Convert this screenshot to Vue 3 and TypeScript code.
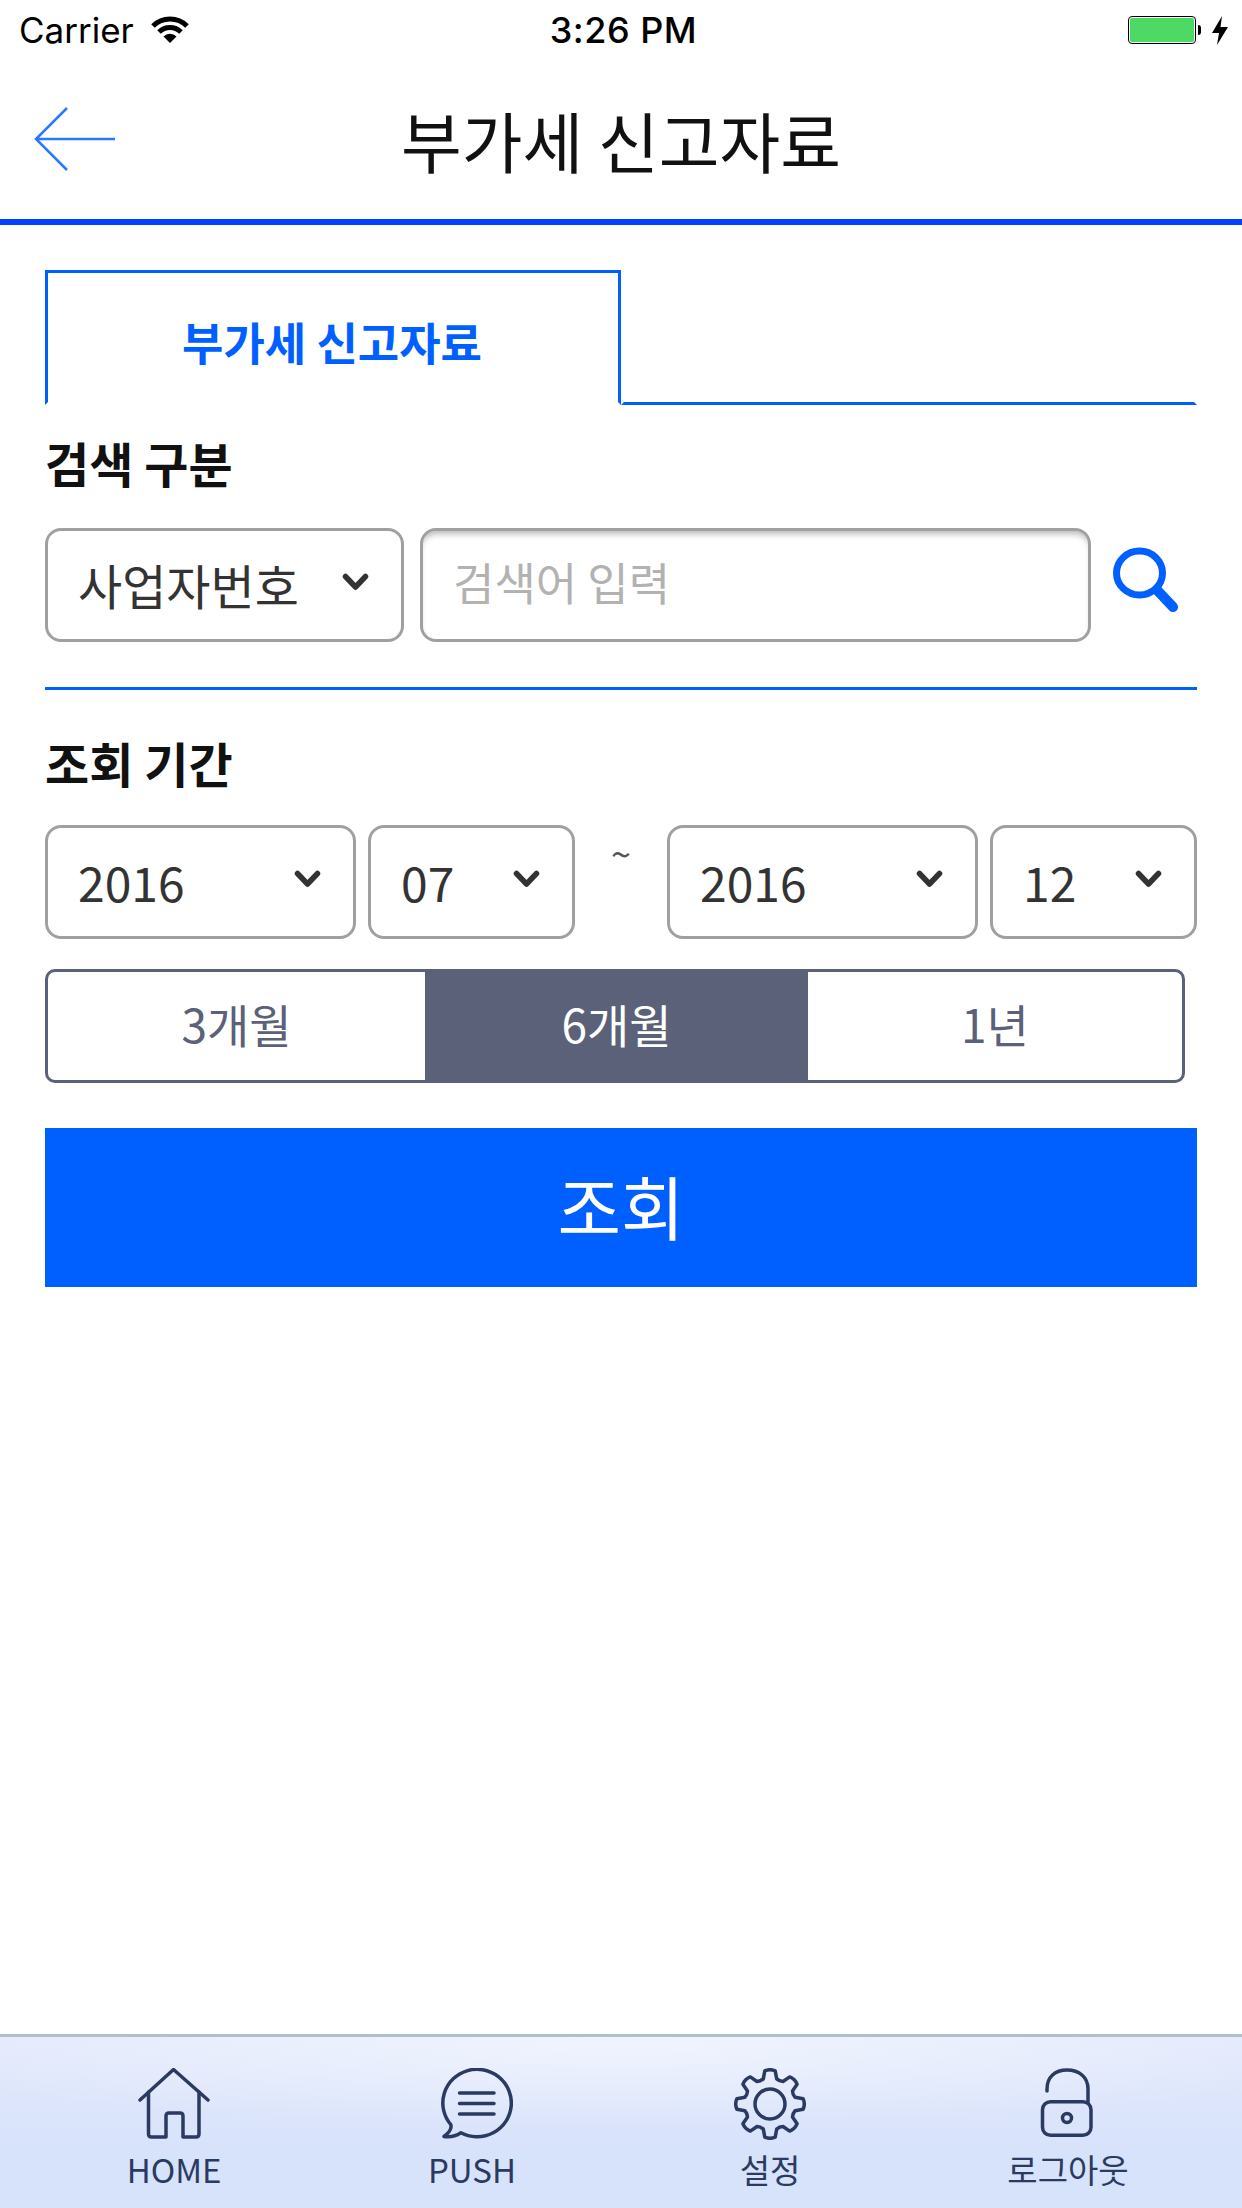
<script setup lang="ts">
interface DateSelect {
  value: string
  size: 'year' | 'month'
}

const from: DateSelect[] = [
  { value: '2016', size: 'year' },
  { value: '07', size: 'month' },
]
const to: DateSelect[] = [
  { value: '2016', size: 'year' },
  { value: '12', size: 'month' },
]
const periods = ['3개월', '6개월', '1년']
const activePeriod = '6개월'

// 8 teeth gear outline, centre at 36,36
const gearPath = (() => {
  const pts: string[] = []
  const teeth = 8
  for (let i = 0; i < teeth; i++) {
    const a = (i * 360) / teeth - 90
    const at = (r: number, d: number) => {
      const t = ((a + d) * Math.PI) / 180
      return `${(36 + r * Math.cos(t)).toFixed(1)} ${(36 + r * Math.sin(t)).toFixed(1)}`
    }
    pts.push(`${i === 0 ? 'M' : 'L'}${at(26, -15)}`)
    pts.push(`L${at(33.5, -9)}`)
    pts.push(`Q${at(35.5, 0)} ${at(33.5, 9)}`)
    pts.push(`L${at(26, 15)}`)
    const next = ((a + 22.5) * Math.PI) / 180
    const q = `${(36 + 24.5 * Math.cos(next)).toFixed(1)} ${(36 + 24.5 * Math.sin(next)).toFixed(1)}`
    const t2 = ((a + 30) * Math.PI) / 180
    pts.push(`Q${q} ${(36 + 26 * Math.cos(t2)).toFixed(1)} ${(36 + 26 * Math.sin(t2)).toFixed(1)}`)
  }
  return pts.join(' ') + 'Z'
})()
</script>

<template>
  <div class="page">
    <div class="status">
      <div class="status__left">
        <span class="status__carrier">Carrier</span>
        <svg class="wifi" width="38" height="27" viewBox="0 0 38 27">
          <path d="M2 10A24 24 0 0 1 36 10" fill="none" stroke="#000" stroke-width="5" />
          <path d="M8 16A15.5 15.5 0 0 1 30 16" fill="none" stroke="#000" stroke-width="5" />
          <path d="M19 27L12.5 20.5A9 9 0 0 1 25.5 20.5Z" fill="#000" />
        </svg>
      </div>
      <div class="status__time">3:26 PM</div>
      <div class="status__right">
        <div class="battery"><div class="battery__fill" /></div>
        <div class="battery__nub" />
        <svg class="bolt" width="16" height="29" viewBox="0 0 16 29">
          <path d="M10 0L0 17H7L5 29L16 11H8.500Z" fill="#000" />
        </svg>
      </div>
    </div>

    <header class="header">
      <svg class="header__back" width="82" height="64" viewBox="0 0 82 64">
        <path d="M33 1L2 32L33 63M2 32H81" fill="none" stroke="#2a78ff" stroke-width="2.500" />
      </svg>
      <h1 class="header__title">부가세 신고자료</h1>
    </header>

    <main class="main">
      <div class="tabs">
        <div class="tabs__item">부가세 신고자료</div>
        <div class="tabs__rest" />
      </div>

      <div class="label">검색 구분</div>
      <div class="row">
        <div class="select select_type">
          <span>사업자번호</span>
          <svg class="select__arrow" width="27" height="18" viewBox="0 0 27 18">
            <path d="M3.500 3.500L13.500 14L23.500 3.500" fill="none" stroke="#333" stroke-width="5.500" stroke-linecap="round" stroke-linejoin="round" />
          </svg>
        </div>
        <input class="search" placeholder="검색어 입력" />
        <svg class="search__icon" width="66" height="66" viewBox="0 0 66 66">
          <ellipse cx="26.500" cy="26" rx="23" ry="22" fill="none" stroke="#0060ff" stroke-width="7" />
          <path d="M44 43L60 60" fill="none" stroke="#0060ff" stroke-width="10" stroke-linecap="round" />
        </svg>
      </div>

      <div class="divider" />

      <div class="label label_second">조회 기간</div>
      <div class="row">
        <div
            v-for="item in from"
            :key="item.size"
            class="select"
            :class="`select_${item.size}`"
        >
          <span>{{ item.value }}</span>
          <svg class="select__arrow" width="27" height="18" viewBox="0 0 27 18">
            <path d="M3.500 3.500L13.500 14L23.500 3.500" fill="none" stroke="#333" stroke-width="5.500" stroke-linecap="round" stroke-linejoin="round" />
          </svg>
        </div>
        <span class="tilde">~</span>
        <div
            v-for="item in to"
            :key="item.size"
            class="select"
            :class="`select_${item.size}`"
        >
          <span>{{ item.value }}</span>
          <svg class="select__arrow" width="27" height="18" viewBox="0 0 27 18">
            <path d="M3.500 3.500L13.500 14L23.500 3.500" fill="none" stroke="#333" stroke-width="5.500" stroke-linecap="round" stroke-linejoin="round" />
          </svg>
        </div>
      </div>

      <div class="periods">
        <div
            v-for="period in periods"
            :key="period"
            class="periods__item"
            :class="{ periods__item_active: period === activePeriod }"
        >
          {{ period }}
        </div>
      </div>

      <button class="submit">조회</button>
    </main>

    <nav class="nav">
      <div class="nav__item">
        <svg width="72" height="72" viewBox="0 0 72 72" fill="none" stroke="#2b3a60" stroke-width="3.500" stroke-linecap="round" stroke-linejoin="round">
          <path d="M2 32L35.500 1.500L70 32" />
          <path d="M10.500 24V66Q10.500 69 13.500 69H28V48Q28 45 31 45H42Q45 45 45 48V69H58Q61 69 61 66V24" />
        </svg>
        <span class="nav__label">HOME</span>
      </div>
      <div class="nav__item">
        <svg class="nav__bubble" width="72" height="72" viewBox="0 0 72 72" fill="none" stroke="#2b3a60" stroke-width="3.500" stroke-linecap="round" stroke-linejoin="round">
          <path d="M19.900 64.800A34.250 33.750 0 1 0 9.800 56.700Q11.500 62 3 68.500Q12 70 19.900 64.800Z" />
          <path d="M18.500 25H53M18.500 35.500H53M18.500 46H53" />
        </svg>
        <span class="nav__label">PUSH</span>
      </div>
      <div class="nav__item">
        <svg width="72" height="72" viewBox="0 0 72 72" fill="none" stroke="#2b3a60" stroke-width="3.500" stroke-linecap="round" stroke-linejoin="round">
          <path :d="gearPath" />
          <circle cx="36" cy="36" r="15" />
        </svg>
        <span class="nav__label">설정</span>
      </div>
      <div class="nav__item">
        <svg width="72" height="72" viewBox="0 0 72 72" fill="none" stroke="#2b3a60" stroke-width="3.500" stroke-linecap="round" stroke-linejoin="round">
          <path d="M15 23V21C15 9 23 2 35 2S56 9 56 21V34" />
          <rect x="10.500" y="33.750" width="48.500" height="33.500" rx="8" />
          <circle cx="35" cy="50" r="4.500" />
        </svg>
        <span class="nav__label">로그아웃</span>
      </div>
    </nav>
  </div>
</template>

<style>
body {
  margin: 0;
  background: #fff;
}
</style>

<style scoped>
.page {
  width: 1242px;
  height: 2208px;
  display: flex;
  flex-direction: column;
  font-family: "Noto Sans CJK KR", "Noto Sans", sans-serif;
  color: #111;
  overflow: hidden;
}

.status {
  height: 60px;
  display: grid;
  grid-template-columns: 1fr auto 1fr;
  align-items: center;
  padding: 0 14px 0 19px;
  font-family: Inter, "Liberation Sans", sans-serif;
  font-size: 36px;
  color: #000;
}

.status__left {
  display: flex;
  align-items: center;
  gap: 17px;
}

.status__carrier {
  font-size: 35px;
}

.wifi {
  margin-top: -2px;
}

.status__time {
  font-weight: 500;
  letter-spacing: 0.5px;
}

.status__right {
  display: flex;
  align-items: center;
  justify-content: flex-end;
}

.battery {
  width: 68px;
  height: 28px;
  box-sizing: border-box;
  border: 1.5px solid #000;
  border-radius: 4px;
  padding: 1px;
}

.battery__fill {
  height: 100%;
  border-radius: 2px;
  background: #4cd964;
}

.battery__nub {
  width: 3px;
  height: 10px;
  margin-left: 2px;
  border-radius: 0 3px 3px 0;
  background: #000;
}

.bolt {
  margin-left: 11px;
}

.header {
  position: relative;
  height: 159px;
  border-bottom: 6px solid #0040ff;
  display: flex;
  align-items: center;
  justify-content: center;
}

.header__back {
  position: absolute;
  left: 34px;
  top: 47px;
}

.header__title {
  margin: 0 0 2px;
  font-size: 66px;
  font-weight: 400;
  line-height: 1;
  color: #111;
}

.main {
  flex: 1;
  padding: 45px 45px 0;
  display: flex;
  flex-direction: column;
}

.tabs {
  display: flex;
  height: 135px;
}

.tabs__item {
  width: 576px;
  box-sizing: border-box;
  border: 3px solid #0060ff;
  border-bottom-color: transparent;
  display: flex;
  align-items: center;
  justify-content: center;
  font-size: 45px;
  font-weight: 700;
  color: #0060ff;
  padding: 8px 2px 0 0;
}

.tabs__rest {
  flex: 1;
  border: 3px solid transparent;
  border-top: none;
  border-bottom-color: #0060ff;
}

.label {
  height: 123px;
  box-sizing: border-box;
  padding-bottom: 10px;
  display: flex;
  align-items: center;
  font-size: 48px;
  font-weight: 700;
  color: #111;
}

.label_second {
  height: 135px;
  padding: 8px 0 0;
}

.row {
  display: flex;
  align-items: flex-start;
  height: 114px;
}

.select {
  height: 114px;
  box-sizing: border-box;
  border: 3px solid #a0a0a0;
  border-radius: 16px;
  display: flex;
  align-items: center;
  justify-content: space-between;
  padding: 0 32px 3px 30px;
  font-size: 48px;
  color: #333;
  background: #fff;
}

.select__arrow {
  margin-top: -3px;
}

.select_type {
  width: 359px;
}

.select_year {
  width: 311px;
}

.select_month {
  width: 207px;
  margin-left: 12px;
}

.search {
  width: 671px;
  height: 114px;
  box-sizing: border-box;
  margin-left: 16px;
  padding: 0 30px 8px;
  border: 3px solid #a0a0a0;
  border-radius: 16px;
  box-shadow: inset 0 6px 6px -3px rgba(0, 0, 0, 0.28);
  font-family: inherit;
  font-size: 45px;
  outline: none;
  appearance: none;
}

.search::placeholder {
  color: #b2b2b2;
  opacity: 1;
}

.search__icon {
  margin: 19px 0 0 22px;
}

.divider {
  height: 3px;
  margin-top: 45px;
  background: #0060ff;
}

.tilde {
  width: 92px;
  flex: none;
  text-align: center;
  font-size: 36px;
  line-height: 40px;
  color: #555;
  margin-top: 7px;
}

.periods {
  width: 1140px;
  height: 114px;
  box-sizing: border-box;
  margin-top: 30px;
  border: 3px solid #5b6178;
  border-radius: 10px;
  overflow: hidden;
  display: grid;
  grid-template-columns: 377px 383px 1fr;
}

.periods__item {
  display: flex;
  align-items: center;
  justify-content: center;
  padding-bottom: 6px;
  font-size: 46px;
  color: #5b6178;
}

.periods__item_active {
  background: #5b6178;
  color: #fff;
}

.submit {
  height: 159px;
  margin-top: 45px;
  padding: 0 0 6px;
  border: none;
  background: #0060ff;
  color: #fff;
  font-family: inherit;
  font-size: 69px;
}

.nav {
  height: 174px;
  box-sizing: border-box;
  border-top: 3px solid #afc0c8;
  padding: 31px 25px 0;
  display: grid;
  grid-template-columns: repeat(4, 1fr);
  background:
      radial-gradient(ellipse 800px 90px at 621px 0, #f0f4fe, rgba(240, 244, 254, 0)),
      linear-gradient(#e3e9fb, #d7e2fb 70%);
}

.nav__item {
  display: flex;
  flex-direction: column;
  align-items: center;
}

.nav__bubble {
  margin-left: 10px;
}

.nav__label {
  height: 40px;
  line-height: 40px;
  margin-top: 9px;
  font-size: 33px;
  color: #2b3a60;
}
</style>
